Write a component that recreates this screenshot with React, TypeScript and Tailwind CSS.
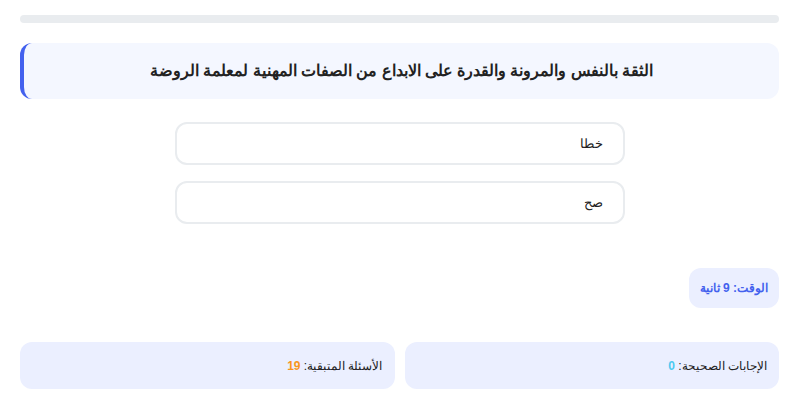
import React from "react";

const options = ["خطا", "صح"];

export default function App() {
  return (
    <div
      dir="rtl"
      className="h-screen overflow-hidden bg-white pl-5 pr-2.5 pt-[15px] text-[#222]"
      style={{ fontFamily: '"Liberation Sans", Arial, sans-serif' }}
    >
      <div className="h-2 w-full rounded-full bg-[#e9ecef]" />

      <div className="mt-5 flex h-14 items-center justify-center rounded-xl border-l-4 border-[#4361ee] bg-[#f4f7ff]">
        <h2 className="text-[15.5px] font-bold text-[#222]">
          الثقة بالنفس والمرونة والقدرة على الابداع من الصفات المهنية لمعلمة الروضة
        </h2>
      </div>

      <div className="mx-auto mt-[23px] flex w-[450px] flex-col gap-4">
        {options.map((o) => (
          <button
            key={o}
            className="flex h-[43px] items-center rounded-xl border-2 border-[#e9ecef] bg-white px-5 text-right text-[13px] text-[#222]"
          >
            {o}
          </button>
        ))}
      </div>

      <div className="mt-11 flex">
        <div className="flex h-10 items-center rounded-xl bg-[#ebefff] px-[11px] text-xs font-bold text-[#4361ee]">
          الوقت:&nbsp;<span>9</span>&nbsp;ثانية
        </div>
      </div>

      <div className="mt-[34px] grid grid-cols-2 gap-2.5">
        <div className="flex h-[47px] items-center rounded-xl bg-[#ebefff] px-3 text-xs text-[#222]">
          الإجابات الصحيحة:&nbsp;<span className="font-bold text-[#4cc9f0]">0</span>
        </div>
        <div className="flex h-[47px] items-center rounded-xl bg-[#ebefff] px-3 text-xs text-[#222]">
          الأسئلة المتبقية:&nbsp;<span className="font-bold text-[#f8961e]">19</span>
        </div>
      </div>
    </div>
  );
}
